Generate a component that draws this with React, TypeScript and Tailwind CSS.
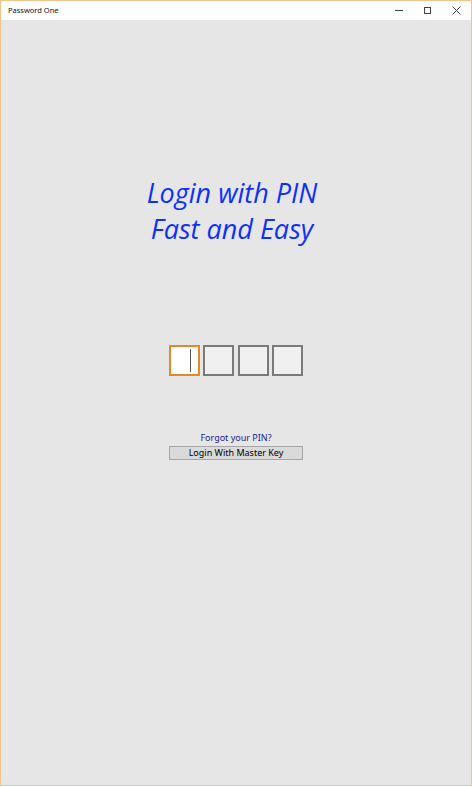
function PinBox({ active }: { active?: boolean }) {
  return (
    <div
      className={
        active
          ? "relative w-[31px] h-[31px] border-2 border-[#e3892b] bg-white"
          : "w-[31px] h-[31px] border-2 border-[#7a7a7a] bg-[#f0f0f0]"
      }
    >
      {active && (
        <div className="absolute left-[19px] top-[2px] w-px h-[23px] bg-[#555]" />
      )}
    </div>
  );
}

export default function App() {
  return (
    <div className="w-[472px] h-[786px] flex flex-col border border-[#f3c48a] bg-white font-['Noto_Sans',sans-serif]">
      <div className="h-[19px] flex items-center justify-between bg-white shrink-0">
        <span className="pl-[7px] text-[7.5px] text-[#111]">Password One</span>
        <div className="flex items-center h-full">
          <div className="w-[29px] h-full flex items-center justify-center">
            <div className="w-[8px] h-px bg-[#444]" />
          </div>
          <div className="w-[29px] h-full flex items-center justify-center">
            <div className="w-[7px] h-[7px] border border-[#444]" />
          </div>
          <div className="w-[29px] h-full flex items-center justify-center">
            <svg width="9" height="9" viewBox="0 0 9 9">
              <path d="M0.5 0.5 L8.5 8.5 M8.5 0.5 L0.5 8.5" stroke="#444" strokeWidth="1" />
            </svg>
          </div>
        </div>
      </div>
      <div className="flex-1 bg-[#e6e6e6] flex flex-col items-center">
        <h1 className="mt-[155px] pr-[8px] text-center italic text-[#0f31f5] text-[27px] leading-[36px] font-['Open_Sans',sans-serif]">
          Login with PIN
          <br />
          Fast and Easy
        </h1>
        <div className="mt-[98px] flex gap-[3.5px]">
          <PinBox active />
          <PinBox />
          <PinBox />
          <PinBox />
        </div>
        <p className="mt-[56px] text-[9px] leading-[12px] text-[#1c1c8e]">
          Forgot your PIN?
        </p>
        <button className="mt-[2px] w-[134px] h-[14px] bg-[#dadada] border border-[#a6a6a6] text-[9px] leading-[12px] text-black">
          Login With Master Key
        </button>
      </div>
    </div>
  );
}
